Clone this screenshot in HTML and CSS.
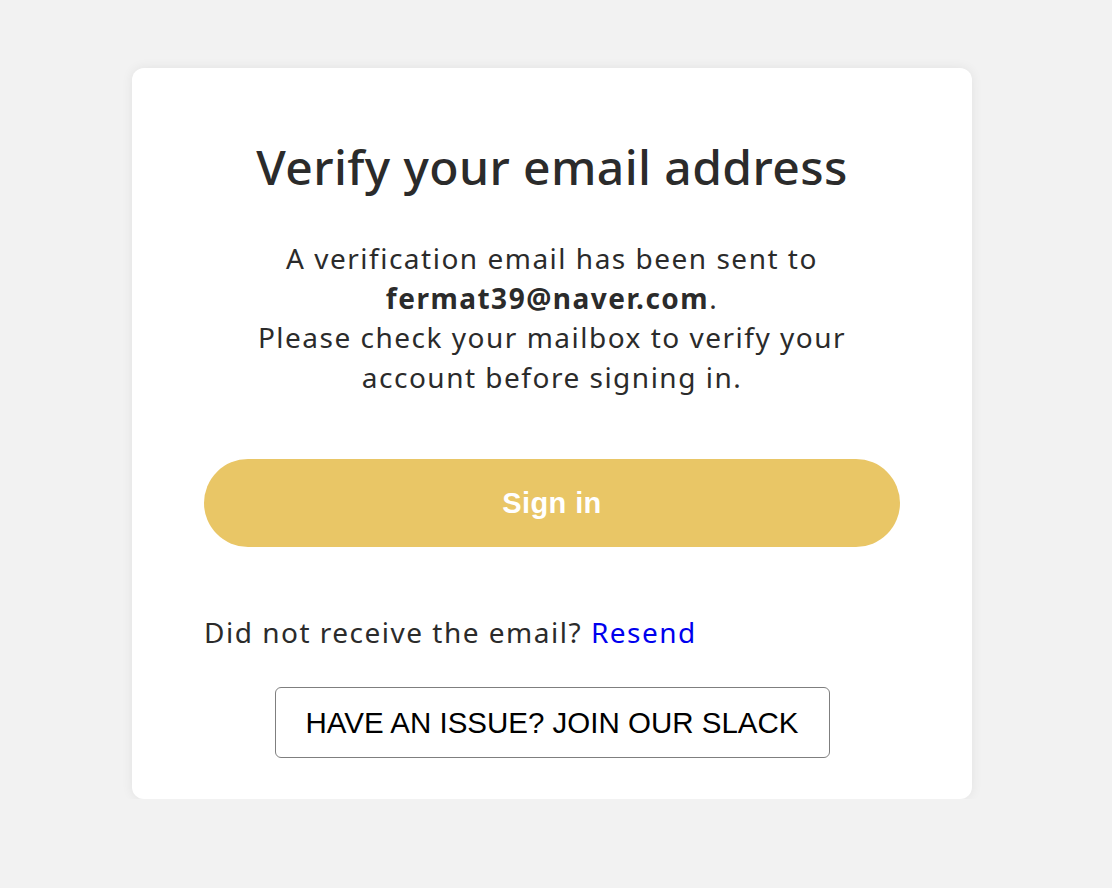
FILE: index.html
```html
<!DOCTYPE html>
<html>
<head>
<meta charset="utf-8">
<link rel="stylesheet" href="styles.css">
</head>
<body>
<main class="page">
  <section class="card">
    <h1 class="title">Verify your email address</h1>
    <p class="message">A verification email has been sent to<br><strong>fermat39@naver.com</strong>.<br>Please check your mailbox to verify your<br>account before signing in.</p>
    <button class="signin">Sign in</button>
    <p class="resend">Did not receive the email? <a class="resend-link" href="#">Resend</a></p>
    <div class="slack-row">
      <button class="slack">HAVE AN ISSUE? JOIN OUR SLACK</button>
    </div>
  </section>
</main>
</body>
</html>
```
FILE: styles.css
```css
html, body {
  margin: 0;
  padding: 0;
  background: #f2f2f2;
}
body {
  font-family: "Noto Sans", "Open Sans", sans-serif;
  color: #2b2b2b;
}
.page {
  display: flex;
  justify-content: flex-start;
  padding: 68px 0 0 132px;
}
.card {
  width: 840px;
  box-sizing: border-box;
  background: #fff;
  border-radius: 12px;
  box-shadow: 0 0 12px rgba(0, 0, 0, 0.07);
  padding: 0 72px 41px;
  display: flex;
  flex-direction: column;
}
.title {
  margin: 68px 0 0;
  text-align: center;
  font-size: 48px;
  font-weight: 500;
  letter-spacing: 0.4px;
  line-height: 62px;
  color: #2b2b2b;
}
.message {
  margin: 41px 0 0;
  text-align: center;
  font-size: 28px;
  letter-spacing: 1.5px;
  line-height: 39.5px;
  color: #2b2b2b;
}
.message strong {
  font-weight: 700;
}
.signin {
  margin-top: 62px;
  height: 88px;
  border: none;
  border-radius: 44px;
  background: #e9c666;
  color: #fff;
  font-family: "Liberation Sans", Arial, sans-serif;
  font-weight: 700;
  font-size: 29px;
  letter-spacing: 0.4px;
  cursor: pointer;
}
.resend {
  margin: 65px 0 0;
  font-size: 28px;
  letter-spacing: 1.5px;
  line-height: 40px;
  color: #2b2b2b;
}
.resend-link {
  color: #0000ee;
  text-decoration: none;
}
.slack-row {
  display: flex;
  justify-content: center;
  margin-top: 35px;
}
.slack {
  width: 555px;
  height: 71px;
  background: #fff;
  border: 1.5px solid #7f7f7f;
  border-radius: 6px;
  font-family: "Liberation Sans", Arial, sans-serif;
  font-size: 29.5px;
  color: #000;
  cursor: pointer;
}
```
